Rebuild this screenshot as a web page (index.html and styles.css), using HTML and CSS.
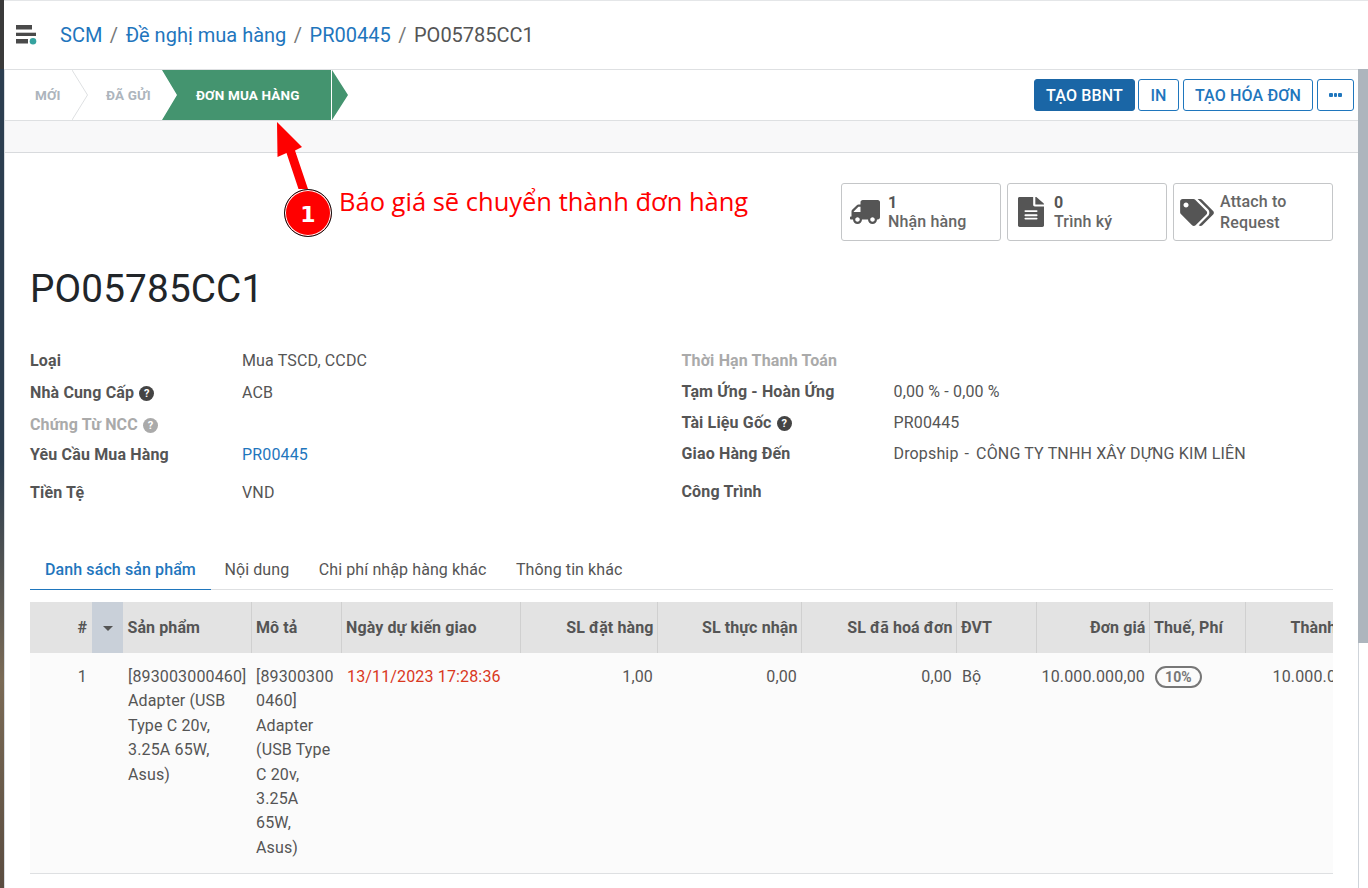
FILE: index.html
```html
<!DOCTYPE html>
<html lang="vi">
<head>
    <meta charset="UTF-8">
    <title>PO05785CC1</title>
    <link rel="stylesheet" href="styles.css">
</head>
<body>
    <header class="topbar">
        <svg class="menu-icon" viewBox="0 0 21 20" width="21" height="20">
            <rect x="0" y="0" width="16" height="4.500" fill="#4a4a4a"/>
            <rect x="0" y="7.700" width="20" height="3.300" fill="#4a4a4a"/>
            <rect x="0" y="14" width="12" height="4.500" fill="#4a4a4a"/>
            <circle cx="17" cy="16.300" r="3.300" fill="#35a29f"/>
        </svg>
        <nav class="crumbs">
            <a>SCM</a><span class="sep">/</span>
            <a>Đề nghị mua hàng</a><span class="sep">/</span>
            <a>PR00445</a><span class="sep">/</span>
            <span class="current">PO05785CC1</span>
        </nav>
    </header>

    <div class="window">
        <div class="page">
            <div class="statusbar">
                <div class="steps">
                    <div class="step step-new">
                        MỚI
                        <svg viewBox="0 0 16 50" width="16" height="50"><path d="M0 0L15.500 25L0 50" fill="none" stroke="#dee0e2"/></svg>
                    </div>
                    <div class="step step-sent">ĐÃ GỬI</div>
                    <div class="step step-active">ĐƠN MUA HÀNG</div>
                </div>
                <div class="actions">
                    <button class="btn btn-primary">TẠO BBNT</button>
                    <button class="btn btn-print">IN</button>
                    <button class="btn btn-invoice">TẠO HÓA ĐƠN</button>
                    <button class="btn btn-more"><i></i><i></i><i></i></button>
                </div>
            </div>
            <div class="greyband"></div>

            <div class="sheet">
                <div class="buttonbox">
                    <div class="statbtn">
                        <div class="staticon">
                            <svg viewBox="0 0 640 512" width="30" height="24"><path fill="#555" d="M624 352h-16V243.900c0-12.700-5.100-24.900-14.100-33.900L494 110.100c-9-9-21.200-14.100-33.900-14.100H416V48c0-26.500-21.500-48-48-48H48C21.500 0 0 21.500 0 48v320c0 26.500 21.500 48 48 48h16c0 53 43 96 96 96s96-43 96-96h128c0 53 43 96 96 96s96-43 96-96h48c8.800 0 16-7.200 16-16v-32c0-8.800-7.200-16-16-16zM160 464c-26.500 0-48-21.500-48-48s21.500-48 48-48 48 21.500 48 48-21.500 48-48 48zm320 0c-26.500 0-48-21.500-48-48s21.500-48 48-48 48 21.500 48 48-21.500 48-48 48zm80-208H416V144h44.100l99.900 99.900V256z" transform="matrix(-1 0 0 1 640 0)"/></svg>
                        </div>
                        <div class="stattext"><b>1</b><span>Nhận hàng</span></div>
                    </div>
                    <div class="statbtn">
                        <div class="staticon">
                            <svg viewBox="0 0 384 512" width="26" height="30" preserveAspectRatio="none"><path fill="#555" d="M224 136V0H24C10.700 0 0 10.700 0 24v464c0 13.300 10.700 24 24 24h336c13.300 0 24-10.700 24-24V160H248c-13.200 0-24-10.800-24-24zm64 236c0 6.600-5.400 12-12 12H108c-6.600 0-12-5.400-12-12v-8c0-6.600 5.400-12 12-12h168c6.600 0 12 5.400 12 12v8zm0-64v8c0 6.600-5.400 12-12 12H108c-6.600 0-12-5.400-12-12v-8c0-6.600 5.400-12 12-12h168c6.600 0 12 5.400 12 12zm0-72v8c0 6.600-5.400 12-12 12H108c-6.600 0-12-5.400-12-12v-8c0-6.600 5.400-12 12-12h168c6.600 0 12 5.400 12 12zm96-114.100v6.100H256V0h6.100c6.400 0 12.500 2.500 17 7l97.900 98c4.500 4.500 7 10.600 7 16.900z"/></svg>
                        </div>
                        <div class="stattext"><b>0</b><span>Trình ký</span></div>
                    </div>
                    <div class="statbtn">
                        <div class="staticon">
                            <svg viewBox="0 0 640 512" width="34" height="27"><path fill="#555" d="M497.900 225.900L286.100 14.100A48 48 0 0 0 252.100 0H48C21.500 0 0 21.500 0 48v204.100a48 48 0 0 0 14.100 33.900l211.900 211.900c18.700 18.700 49.100 18.700 67.900 0l204.100-204.100c18.700-18.700 18.700-49.100 0-67.900zM112 160c-26.500 0-48-21.500-48-48s21.500-48 48-48 48 21.500 48 48-21.500 48-48 48zm513.900 133.800L421.800 497.900c-18.700 18.700-49.100 18.700-67.900 0l-.4-.4L527.600 323.500c17-17 26.400-39.600 26.400-63.600s-9.400-46.600-26.400-63.600L331.400 0h48.700a48 48 0 0 1 33.900 14.100l211.900 211.900c18.700 18.700 18.700 49.100 0 67.800z"/></svg>
                        </div>
                        <div class="stattext stat-label">Attach to<br>Request</div>
                    </div>
                </div>

                <h1 class="title">PO05785CC1</h1>

                <div class="fields">
                    <div class="col">
                        <div class="row h32"><label>Loại</label><span>Mua TSCD, CCDC</span></div>
                        <div class="row h32"><label>Nhà Cung Cấp <em class="help">?</em></label><span>ACB</span></div>
                        <div class="row h30"><label class="muted">Chứng Từ NCC <em class="help">?</em></label></div>
                        <div class="row h38"><label>Yêu Cầu Mua Hàng</label><a>PR00445</a></div>
                        <div class="row h31"><label>Tiền Tệ</label><span>VND</span></div>
                    </div>
                    <div class="col">
                        <div class="row h31"><label class="muted">Thời Hạn Thanh Toán</label></div>
                        <div class="row h31"><label>Tạm Ứng - Hoàn Ứng</label><span>0,00 % - 0,00 %</span></div>
                        <div class="row h31"><label>Tài Liệu Gốc <em class="help">?</em></label><span>PR00445</span></div>
                        <div class="row h38"><label>Giao Hàng Đến</label><span>Dropship<span class="dash">-</span>CÔNG TY TNHH XÂY DỰNG KIM LIÊN</span></div>
                        <div class="row h31"><label>Công Trình</label></div>
                    </div>
                </div>

                <ul class="tabs">
                    <li class="tab-active">Danh sách sản phẩm</li>
                    <li>Nội dung</li>
                    <li>Chi phí nhập hàng khác</li>
                    <li>Thông tin khác</li>
                </ul>

                <div class="tablewrap">
                    <table class="lines">
                        <colgroup>
                            <col class="c-num"><col class="c-sort"><col class="c-prod"><col class="c-desc"><col class="c-date">
                            <col class="c-qty"><col class="c-recv"><col class="c-inv"><col class="c-uom"><col class="c-price">
                            <col class="c-tax"><col class="c-total">
                        </colgroup>
                        <thead>
                            <tr>
                                <th class="num index">#</th>
                                <th class="sort"><i class="caret"></i></th>
                                <th>Sản phẩm</th>
                                <th>Mô tả</th>
                                <th>Ngày dự kiến giao</th>
                                <th class="num">SL đặt hàng</th>
                                <th class="num">SL thực nhận</th>
                                <th class="num">SL đã hoá đơn</th>
                                <th>ĐVT</th>
                                <th class="num">Đơn giá</th>
                                <th>Thuế, Phí</th>
                                <th class="num total">Thành tiền</th>
                            </tr>
                        </thead>
                        <tbody>
                            <tr>
                                <td class="num index">1</td>
                                <td></td>
                                <td class="prod">[893003000460] Adapter (USB Type C 20v, 3.25A 65W, Asus)</td>
                                <td class="desc">[893003000460] Adapter (USB Type C 20v, 3.25A 65W, Asus)</td>
                                <td class="late">13/11/2023 17:28:36</td>
                                <td class="num">1,00</td>
                                <td class="num">0,00</td>
                                <td class="num">0,00</td>
                                <td class="shift">Bộ</td>
                                <td class="num">10.000.000,00</td>
                                <td class="shift"><span class="badge">10%</span></td>
                                <td class="num">10.000.000,00</td>
                            </tr>
                        </tbody>
                    </table>
                </div>
            </div>
        </div>
        <div class="scrollbar"><div class="thumb"></div></div>
    </div>

    <!-- annotation drawn over the screenshot -->
    <svg class="arrow" viewBox="0 0 40 70" width="40" height="70">
        <path fill="#fe0000" d="M1 1L26 26L19 29.500L32 68L22.500 68L10.500 32L1.500 36Z"/>
    </svg>
    <div class="marker">1</div>
    <div class="note">Báo giá sẽ chuyển thành đơn hàng</div>
</body>
</html>
```

FILE: styles.css
```css
* {
    box-sizing: border-box;
}
html, body {
    height: 100%;
}
body {
    margin: 0;
    overflow: hidden;
    font-family: Roboto, "Noto Sans", sans-serif;
    font-size: 16px;
    letter-spacing: .15px;
    color: #555;
    background: linear-gradient(#3a3a3a 0, #3a3a3a 69px, #2c3e50 69px, #2c3e50 460px, #7a6a55 680px, #5a4c40 100%);
}
a {
    color: #1f76bd;
}

/* top bar */
.topbar {
    display: flex;
    align-items: center;
    height: 69px;
    margin-left: 4px;
    padding-left: 12px;
    background: #fff;
    border-top: 1px solid #e4e6e8;
}
.menu-icon {
    margin-right: 23px;
}
.crumbs {
    display: flex;
    font-size: 20px;
    letter-spacing: 0;
}
.sep {
    margin: 0 7.500px;
    color: #777;
}

.window {
    display: flex;
    height: 819px;
    margin-left: 4px;
    background: #fff;
    border-left: 1px solid #d8dce0;
}
.page {
    flex: 1;
    min-width: 0;
}

/* status bar */
.statusbar {
    display: flex;
    justify-content: space-between;
    height: 52px;
    background: #fff;
    border-top: 1px solid #dee0e2;
    border-bottom: 1px solid #dee0e2;
}
.steps {
    display: flex;
    font-size: 13.500px;
    font-weight: 700;
    color: #adb5bd;
}
.step {
    display: flex;
    align-items: center;
    height: 50px;
}
.step-new {
    justify-content: space-between;
    width: 83px;
    padding-left: 30px;
}
.step-sent {
    width: 74px;
    padding-left: 18px;
}
.step-active {
    position: relative;
    width: 186px;
    padding-left: 34px;
    color: #fff;
    background: #44946f;
    clip-path: polygon(0 0, 170px 0, 186px 50%, 170px 100%, 0 100%, 15px 50%);
}
.step-active::after {
    content: "";
    position: absolute;
    top: 0;
    left: 169px;
    width: 1px;
    height: 50px;
    background: #fff;
}
.actions {
    display: flex;
    gap: 4px;
    padding: 9px 4px 0 0;
}
.btn {
    height: 32px;
    padding: 0 11px;
    font-family: inherit;
    font-size: 16px;
    font-weight: 500;
    letter-spacing: .15px;
    color: #1f76bd;
    background: #fff;
    border: 1px solid #1f76bd;
    border-radius: 3px;
}
.btn-primary {
    width: 101px;
    margin-right: -1px;
    padding: 0;
    color: #fff;
    background: #1a66a6;
    border-color: #1a66a6;
}
.btn-print {
    width: 41px;
    padding: 0;
}
.btn-invoice {
    width: 130px;
    padding: 0;
}
.btn-more {
    display: flex;
    align-items: center;
    justify-content: center;
    gap: 1px;
    width: 37px;
    padding: 0;
}
.btn-more i {
    width: 3.500px;
    height: 4px;
    background: #1f76bd;
    border-radius: 1px;
}
.greyband {
    height: 32px;
    background: #f8f8f9;
    border-bottom: 1px solid #d8dadd;
}

/* form sheet */
.sheet {
    padding: 0 25px;
}
.buttonbox {
    display: flex;
    justify-content: flex-end;
    gap: 6px;
    padding-top: 30px;
}
.statbtn {
    display: flex;
    align-items: center;
    width: 160px;
    height: 58px;
    border: 1px solid #c4c6c8;
    border-radius: 3px;
}
.staticon {
    display: flex;
    flex: none;
    justify-content: center;
    width: 46px;
}
.stattext {
    display: flex;
    flex-direction: column;
    line-height: 19px;
    font-weight: 500;
    color: #666;
}
.stattext b {
    font-weight: 700;
    color: #555;
}
.stat-label {
    display: block;
    line-height: 21px;
}
.title {
    margin: 25px 0 0;
    font-size: 38.700px;
    font-weight: 400;
    line-height: 46px;
    color: #212529;
}
.fields {
    display: flex;
    margin-top: 39px;
}
.col {
    width: 652px;
}
.row {
    display: flex;
    align-items: flex-start;
}
.row label {
    width: 212px;
    font-weight: 700;
    color: #555;
}
.row .muted {
    color: #aaa;
}
.h30 {
    height: 30px;
}
.h31 {
    height: 31px;
}
.h32 {
    height: 32px;
}
.h38 {
    height: 38px;
}
.dash {
    margin: 0 7px 0 6px;
}
.help {
    display: inline-block;
    width: 15px;
    height: 15px;
    margin-left: 1px;
    font-size: 11px;
    font-style: normal;
    font-weight: 700;
    line-height: 15px;
    text-align: center;
    vertical-align: 1px;
    color: #fff;
    background: #444;
    border-radius: 50%;
}
.muted .help {
    background: #aaa;
}

/* tabs */
.tabs {
    display: flex;
    margin: 37px 0 0;
    padding: 0;
    list-style: none;
    letter-spacing: .1px;
    border-bottom: 1px solid #dee0e2;
}
.tabs li {
    padding: 0 15px 0 14.500px;
    line-height: 38px;
    white-space: nowrap;
}
.tabs .tab-active {
    margin-bottom: -1px;
    padding-left: 15px;
    font-weight: 500;
    color: #1f76bd;
    border-bottom: 1px solid #1f76bd;
}
.tabs .tab-active + li {
    padding-left: 13.500px;
}

/* lines */
.tablewrap {
    margin-top: 12px;
    overflow: hidden;
}
.lines {
    width: 1350px;
    table-layout: fixed;
    border-collapse: collapse;
}
.c-num { width: 62px; }
.c-sort { width: 31px; }
.c-prod { width: 128px; }
.c-desc { width: 90px; }
.c-date { width: 179px; }
.c-qty { width: 137px; }
.c-recv { width: 144px; }
.c-inv { width: 155px; }
.c-uom { width: 80px; }
.c-price { width: 113px; }
.c-tax { width: 96px; }
.c-total { width: 135px; }
.lines th {
    height: 51px;
    padding: 0 3px 0 4.500px;
    font-weight: 700;
    letter-spacing: .1px;
    text-align: left;
    white-space: nowrap;
    background: #e3e3e3;
    border-left: 1px solid #d0d0d0;
}
.lines th:nth-child(-n+3) {
    border-left: 0;
}
.lines .total {
    padding-right: 12px;
}
.lines .sort {
    text-align: center;
    background: #c9d0d9;
}
.caret {
    display: inline-block;
    border-top: 5px solid #555;
    border-left: 5px solid transparent;
    border-right: 5px solid transparent;
    vertical-align: 2px;
}
.lines td {
    padding: 12px 4px 13px 5px;
    line-height: 24.400px;
    vertical-align: top;
    background: #fbfbfb;
    border-bottom: 1px solid #dee0e2;
}
.lines .num {
    text-align: right;
}
.lines .index {
    padding-right: 5px;
}
.lines .prod {
    padding-right: 2px;
}
.lines .desc {
    padding-right: 6px;
    overflow-wrap: break-word;
}
.lines .late {
    padding-left: 6px;
    color: #d9381e;
    white-space: nowrap;
}
.lines .shift {
    padding-left: 6px;
}
.badge {
    display: inline-block;
    padding: 0 8px;
    font-size: 14px;
    font-weight: 700;
    line-height: 18px;
    color: #777;
    border: 2px solid #777;
    border-radius: 11px;
}

/* page scrollbar */
.scrollbar {
    flex: none;
    width: 10px;
    background: #fff;
    border-left: 1px solid #cfd4da;
}
.thumb {
    height: 574px;
    margin-left: -1px;
    background: #adb5bd;
}

/* annotation */
.arrow {
    position: absolute;
    left: 276px;
    top: 121px;
}
.marker {
    position: absolute;
    left: 284px;
    top: 189px;
    width: 48px;
    height: 48px;
    font-family: "DejaVu Sans", sans-serif;
    font-size: 22px;
    font-weight: 700;
    letter-spacing: 0;
    line-height: 50px;
    text-align: center;
    color: #fff;
    background: #f00;
    border: 1px solid #111;
    box-shadow: inset 0 0 0 1px #fff;
    border-radius: 50%;
}
.note {
    position: absolute;
    left: 339px;
    top: 183px;
    font-family: "Open Sans", sans-serif;
    font-size: 25.500px;
    letter-spacing: 0;
    line-height: 36px;
    color: #f00;
    white-space: nowrap;
}
```
